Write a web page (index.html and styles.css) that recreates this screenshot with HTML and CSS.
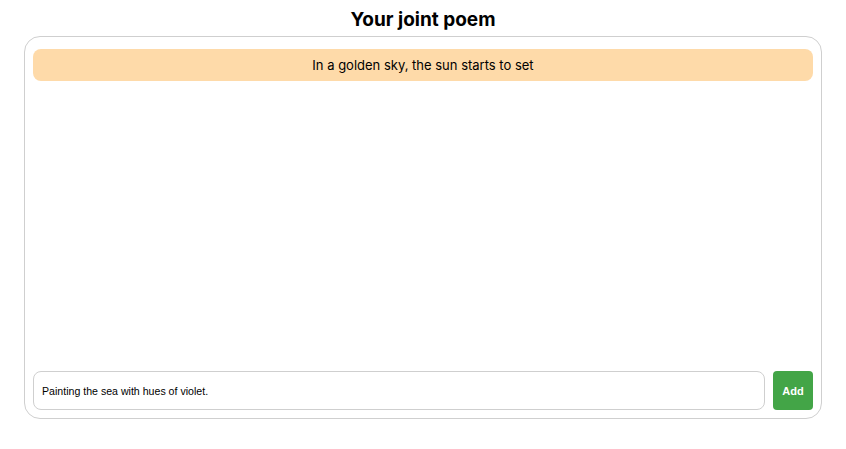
FILE: index.html
```html
<!DOCTYPE html>
<html>
<head>
<meta charset="utf-8">
<link rel="stylesheet" href="styles.css">
</head>
<body>
<h1 class="title">Your joint poem</h1>
<div class="poem">
  <div class="lines">
    <div class="line">In a golden sky, the sun starts to set</div>
  </div>
  <form class="composer">
    <input class="input" type="text" value="Painting the sea with hues of violet.">
    <button class="add" type="button">Add</button>
  </form>
</div>
</body>
</html>
```
FILE: styles.css
```css
html, body { margin: 0; padding: 0; background: #fff; }
body {
  font-family: Inter, "Noto Sans", sans-serif;
  padding: 8px 24px;
}
.title {
  margin: 0 0 4px;
  text-align: center;
  font-size: 19px;
  font-weight: 700;
  line-height: 24px;
  color: #000;
}
.poem {
  border: 1px solid #cfcfcf;
  border-radius: 16px;
  padding: 12px 8px 8px;
  height: 383px;
  box-sizing: border-box;
  display: flex;
  flex-direction: column;
}
.lines { flex: 1; }
.line {
  background: #fedaa9;
  border-radius: 8px;
  height: 32px;
  display: flex;
  align-items: center;
  justify-content: center;
  font-size: 13px;
  color: #000;
}
.composer {
  display: flex;
  gap: 8px;
  margin: 0;
}
.input {
  flex: 1;
  height: 39px;
  box-sizing: border-box;
  border: 1px solid #cfcfcf;
  border-radius: 8px;
  padding: 0 8px;
  font-family: "Liberation Sans", Arial, sans-serif;
  font-size: 10.6px;
  color: #000;
  outline: none;
}
.add {
  width: 40px;
  height: 39px;
  border: none;
  border-radius: 4px;
  background: #43a547;
  color: #fff;
  font-family: "Liberation Sans", Arial, sans-serif;
  font-size: 11px;
  font-weight: 700;
  padding: 0;
}
```
